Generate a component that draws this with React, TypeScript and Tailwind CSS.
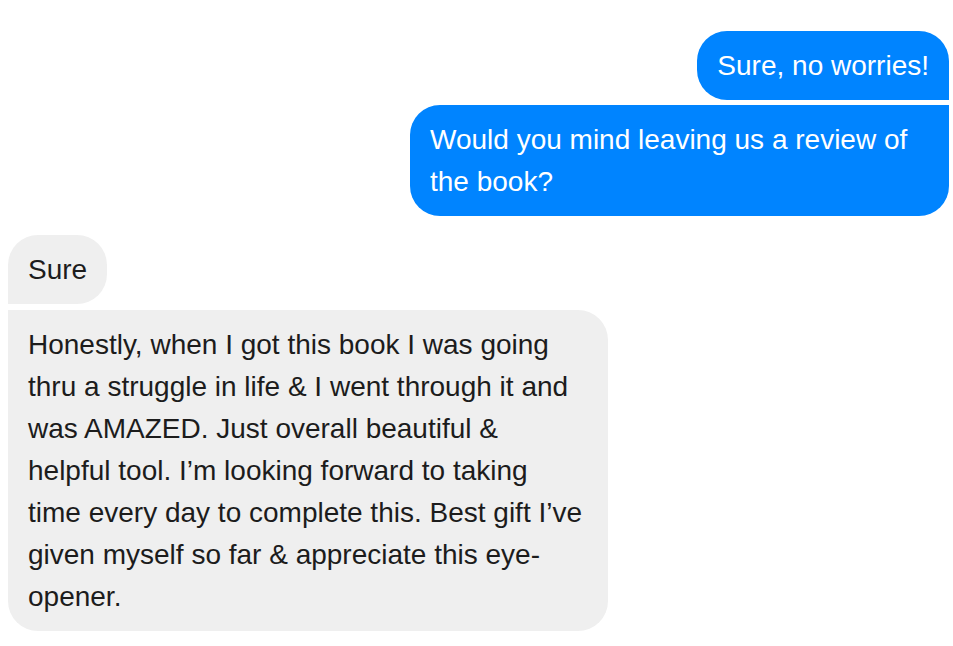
const Outgoing = ({ children, className }: { children: React.ReactNode; className: string }) => (
  <div className={`bg-[#0084ff] text-white px-5 py-[13.5px] ${className}`}>{children}</div>
);

const Incoming = ({ children, className }: { children: React.ReactNode; className: string }) => (
  <div className={`bg-[#efefef] text-[#1c1c1c] px-5 py-[13.5px] ${className}`}>{children}</div>
);

export default function App() {
  return (
    <div className="min-h-screen bg-white font-['Liberation_Sans',Arial,sans-serif] text-[28px] leading-[42px] pl-2 pr-1 pt-[31px]">
      <div className="flex flex-col items-end gap-[5px]">
        <Outgoing className="rounded-[30px] rounded-br-none">Sure, no worries!</Outgoing>
        <Outgoing className="w-[539px] rounded-[30px] rounded-tr-none">
          Would you mind leaving us a review of the book?
        </Outgoing>
      </div>
      <div className="flex flex-col items-start gap-[6px] mt-[19px]">
        <Incoming className="rounded-[30px] rounded-bl-none">Sure</Incoming>
        <Incoming className="w-[600px] rounded-[30px] rounded-tl-none">
          Honestly, when I got this book I was going thru a struggle in life &amp; I went through it and was
          AMAZED. Just overall beautiful &amp; helpful tool. I’m looking forward to taking time every day to
          complete this. Best gift I’ve given myself so far &amp; appreciate this eye-opener.
        </Incoming>
      </div>
    </div>
  );
}
